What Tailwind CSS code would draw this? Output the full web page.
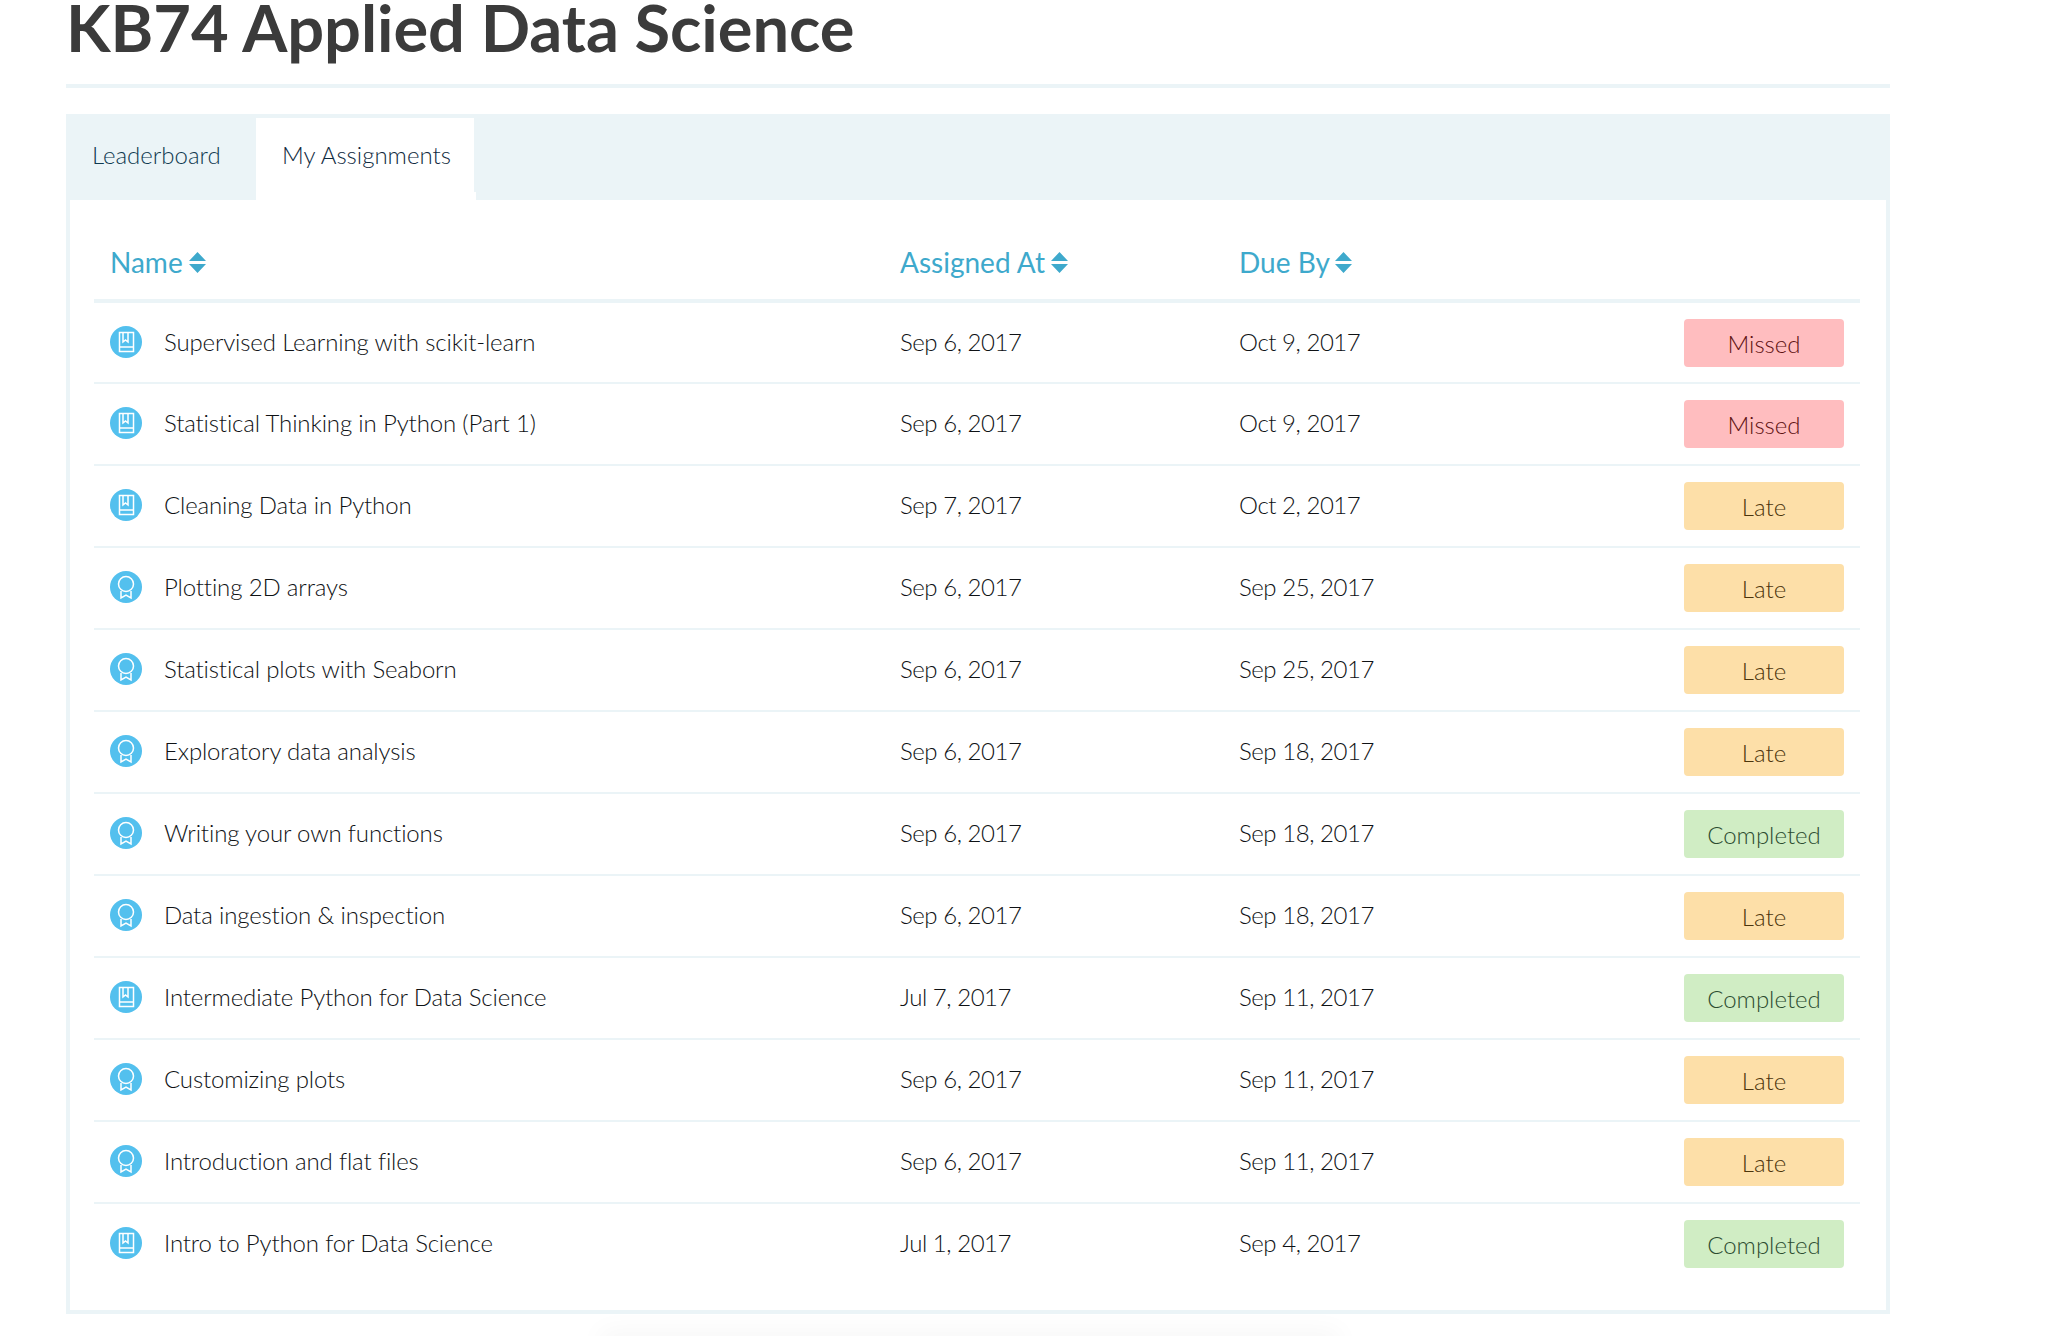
<!DOCTYPE html>
<html lang="en">

<head>
    <meta charset="UTF-8">
    <title>KB74 Applied Data Science</title>
    <script src="https://cdn.jsdelivr.net/npm/@tailwindcss/browser@4"></script>
</head>

<body class="relative bg-white font-['Lato',sans-serif] h-[1336px] overflow-hidden">
    <div class="w-[1824px] ml-[66px]">
        <div class="h-[88px] border-b-4 border-[#ebf4f7]">
            <h1 class="text-[65px] leading-[55px] tracking-[-0.05px] font-bold text-[#3b3b3b]">KB74 Applied Data Science</h1>
        </div>

        <div class="mt-[26px] h-[86px] bg-[#ebf4f7] flex items-end text-[24px] font-light">
            <div class="w-[190px] h-[82px] flex items-center pl-[26px] pb-[8px] text-[#0f3a50]">Leaderboard</div>
            <div class="relative w-[218px] h-[82px] flex items-center pl-[26px] pb-[8px] bg-white text-[#0f2a3e]">
                My Assignments
                <span class="absolute -right-[2px] bottom-0 w-[2px] h-[8px] bg-white"></span>
            </div>
        </div>

        <div class="h-[1114px] border-x-4 border-b-4 border-[#ebf4f7] px-[24px]">
            <table class="w-[1766px] table-fixed border-collapse">
                <thead>
                    <tr class="h-[101px] border-b-4 border-[#ebf4f7] text-[#3ea9cc] text-[28px] text-left">
                        <th class="w-[790px] pl-[16px] font-normal pt-[25px]">
                            <span class="inline-flex items-center gap-[6px]">Name
                                <svg class="w-[17px] h-[21px]" viewBox="0 0 17 21"><path fill="#3ea9cc" d="M8.5 0 17 9H0zM0 12h17l-8.5 9z"/></svg>
                            </span>
                        </th>
                        <th class="w-[340px] pl-[16px] font-normal pt-[25px]">
                            <span class="inline-flex items-center gap-[6px]">Assigned At
                                <svg class="w-[17px] h-[21px]" viewBox="0 0 17 21"><path fill="#3ea9cc" d="M8.5 0 17 9H0zM0 12h17l-8.5 9z"/></svg>
                            </span>
                        </th>
                        <th class="pl-[15px] font-normal pt-[25px]">
                            <span class="inline-flex items-center gap-[5px]">Due By
                                <svg class="w-[17px] h-[21px]" viewBox="0 0 17 21"><path fill="#3ea9cc" d="M8.5 0 17 9H0zM0 12h17l-8.5 9z"/></svg>
                            </span>
                        </th>
                    </tr>
                </thead>
                <tbody id="rows" class="text-[24px] font-light text-[#0f1215]"></tbody>
            </table>
        </div>
    </div>

    <!-- faint shadow showing at the bottom edge -->
    <div class="absolute left-[610px] top-[1340px] w-[720px] h-[10px] shadow-[0_0_26px_10px_rgba(0,0,0,0.035)]"></div>

    <script>
        const bookIcon = `<svg class="w-[32px] h-[32px] -mt-[2px]" viewBox="0 0 32 32"><circle cx="16" cy="16" r="16" fill="#53c0ee"/><g fill="none" stroke="#fff" stroke-width="1.5"><rect x="9.5" y="6.5" width="14" height="19"/><path d="M9.5 21h14M13 7v9l2.5-2 2.5 2V7"/></g></svg>`;
        const ribbonIcon = `<svg class="w-[32px] h-[32px] -mt-[2px]" viewBox="0 0 32 32"><circle cx="16" cy="16" r="16" fill="#53c0ee"/><g fill="none" stroke="#fff" stroke-width="1.5"><circle cx="16" cy="13" r="7.5"/><path d="M11 20v7l5-3 5 3v-7"/></g></svg>`;

        const badges = {
            Missed: 'bg-[#ffbdbf] text-[#5e1212]',
            Late: 'bg-[#fddfa8] text-[#4c350c]',
            Completed: 'bg-[#d0edc4] text-[#2c4c30]',
        };

        const assignments = [
            ['book', 'Supervised Learning with scikit-learn', 'Sep 6, 2017', 'Oct 9, 2017', 'Missed'],
            ['book', 'Statistical Thinking in Python (Part 1)', 'Sep 6, 2017', 'Oct 9, 2017', 'Missed'],
            ['book', 'Cleaning Data in Python', 'Sep 7, 2017', 'Oct 2, 2017', 'Late'],
            ['ribbon', 'Plotting 2D arrays', 'Sep 6, 2017', 'Sep 25, 2017', 'Late'],
            ['ribbon', 'Statistical plots with Seaborn', 'Sep 6, 2017', 'Sep 25, 2017', 'Late'],
            ['ribbon', 'Exploratory data analysis', 'Sep 6, 2017', 'Sep 18, 2017', 'Late'],
            ['ribbon', 'Writing your own functions', 'Sep 6, 2017', 'Sep 18, 2017', 'Completed'],
            ['ribbon', 'Data ingestion &amp; inspection', 'Sep 6, 2017', 'Sep 18, 2017', 'Late'],
            ['book', 'Intermediate Python for Data Science', 'Jul 7, 2017', 'Sep 11, 2017', 'Completed'],
            ['ribbon', 'Customizing plots', 'Sep 6, 2017', 'Sep 11, 2017', 'Late'],
            ['ribbon', 'Introduction and flat files', 'Sep 6, 2017', 'Sep 11, 2017', 'Late'],
            ['book', 'Intro to Python for Data Science', 'Jul 1, 2017', 'Sep 4, 2017', 'Completed'],
        ];

        document.getElementById('rows').innerHTML = assignments.map(([icon, name, assigned, due, status], i) => `
            <tr class="${i < assignments.length - 1 ? 'h-[82px] border-b-2 border-[#ebf4f7]' : 'h-[80px]'}">
                <td class="pl-[16px]"><div class="flex items-center gap-[22px]">${icon === 'book' ? bookIcon : ribbonIcon}<span class="pb-[2px] tracking-[-0.15px]">${name}</span></div></td>
                <td class="pl-[16px] pb-[2px] tracking-[-0.45px]">${assigned}</td>
                <td class="pl-[15px]">
                    <div class="flex items-center justify-between pr-[16px]">
                        <span class="pb-[2px] tracking-[-0.45px]">${due}</span>
                        <span class="w-[160px] h-[48px] rounded-[4px] flex items-center justify-center pt-[2px] ${badges[status]}">${status}</span>
                    </div>
                </td>
            </tr>`).join('');
    </script>
</body>

</html>
